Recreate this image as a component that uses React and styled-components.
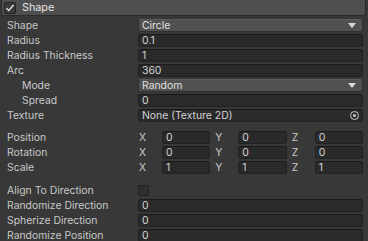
import React from "react";
import styled, { createGlobalStyle } from "styled-components";

const Global = createGlobalStyle`
  html, body { margin: 0; padding: 0; background: #383838; }
  body { font-family: Inter, "Noto Sans", sans-serif; font-size: 10.4px; color: #c4c4c4; }
`;

const Panel = styled.div`
  width: 368px;
  height: 241px;
  overflow: hidden;
  background: #383838;
`;

const Header = styled.div`
  margin: 0 2px 0 1px;
  height: 15px;
  background: #4e4e4e;
  border: 1px solid #2a2a2a;
  border-top: none;
  border-radius: 0 0 3px 3px;
  display: flex;
  align-items: center;
  gap: 6px;
  padding-left: 2px;
  color: #e4e4e4;
  font-size: 10.8px;
`;

const Check = styled.span`
  width: ${(p) => (p.$dark ? 11 : 12)}px;
  height: ${(p) => (p.$dark ? 11 : 12)}px;
  box-sizing: border-box;
  border-radius: 2px;
  background: ${(p) => (p.$dark ? "#2f2f2f" : "#3a3a3a")};
  border: 1px solid #222;
  display: inline-flex;
  align-items: center;
  justify-content: center;
`;

const Body = styled.div`
  padding: 3px 5px 0 7px;
  display: flex;
  flex-direction: column;
  gap: 2px;
`;

const Row = styled.div`
  display: grid;
  grid-template-columns: 131px 1fr;
  height: 13px;
  align-items: center;
`;

const Label = styled.div`
  padding-left: ${(p) => (p.$indent ? 15 : 0)}px;
  white-space: nowrap;
  color: #c8c8c8;
`;

const Field = styled.div`
  height: 13px;
  box-sizing: border-box;
  background: #2a2a2a;
  border: 1px solid #212121;
  border-top-color: #1a1a1a;
  border-radius: 3px;
  padding-left: 3px;
  display: flex;
  align-items: center;
  justify-content: space-between;
  color: #d2d2d2;
  white-space: nowrap;
  overflow: hidden;
`;

const Dropdown = styled(Field)`
  background: #515151;
  border-color: #303030;
  border-top-color: #5a5a5a;
  padding-right: 6px;
  color: #e0e0e0;
`;

const Arrow = styled.span`
  width: 0;
  height: 0;
  border-left: 4px solid transparent;
  border-right: 4px solid transparent;
  border-top: 5px solid #d8d8d8;
`;

const Spacer = styled.div`
  height: ${(p) => p.$h}px;
`;

const Vec = styled.div`
  display: grid;
  grid-template-columns: repeat(3, 1fr);
  gap: 4px;
`;

const Axis = styled.div`
  display: grid;
  grid-template-columns: 24px 1fr;
  align-items: center;
`;

const AxisLabel = styled.span`
  padding-left: 1px;
  color: #c8c8c8;
`;

const ObjIcon = styled.span`
  width: 9px;
  height: 9px;
  margin-right: 3px;
  box-sizing: border-box;
  border: 1px solid #c8c8c8;
  border-radius: 50%;
  display: inline-flex;
  align-items: center;
  justify-content: center;
  &::after {
    content: "";
    width: 3px;
    height: 3px;
    border-radius: 50%;
    background: #c8c8c8;
  }
`;

function Prop({ label, indent, children }) {
  return (
    <Row>
      <Label $indent={indent}>{label}</Label>
      {children}
    </Row>
  );
}

function Vector({ label, values }) {
  return (
    <Row>
      <Label>{label}</Label>
      <Vec>
        {["X", "Y", "Z"].map((a, i) => (
          <Axis key={a}>
            <AxisLabel>{a}</AxisLabel>
            <Field>{values[i]}</Field>
          </Axis>
        ))}
      </Vec>
    </Row>
  );
}

export default function App() {
  return (
    <>
      <Global />
      <Panel>
        <Header>
          <Check>
            <svg width="10" height="10" viewBox="0 0 10 10">
              <path d="M1.4 5.1 L3.8 7.5 L8.6 2" fill="none" stroke="#e6e6e6" strokeWidth="1.2" />
            </svg>
          </Check>
          Shape
        </Header>
        <Body>
          <Prop label="Shape">
            <Dropdown>Circle<Arrow /></Dropdown>
          </Prop>
          <Prop label="Radius"><Field>0.1</Field></Prop>
          <Prop label="Radius Thickness"><Field>1</Field></Prop>
          <Prop label="Arc"><Field>360</Field></Prop>
          <Prop label="Mode" indent>
            <Dropdown>Random<Arrow /></Dropdown>
          </Prop>
          <Prop label="Spread" indent><Field>0</Field></Prop>
          <Prop label="Texture">
            <Field>None (Texture 2D)<ObjIcon /></Field>
          </Prop>
          <Spacer $h={5} />
          <Vector label="Position" values={["0", "0", "0"]} />
          <Vector label="Rotation" values={["0", "0", "0"]} />
          <Vector label="Scale" values={["1", "1", "1"]} />
          <Spacer $h={6} />
          <Prop label="Align To Direction">
            <Check $dark />
          </Prop>
          <Prop label="Randomize Direction"><Field>0</Field></Prop>
          <Prop label="Spherize Direction"><Field>0</Field></Prop>
          <Prop label="Randomize Position"><Field>0</Field></Prop>
        </Body>
      </Panel>
    </>
  );
}
